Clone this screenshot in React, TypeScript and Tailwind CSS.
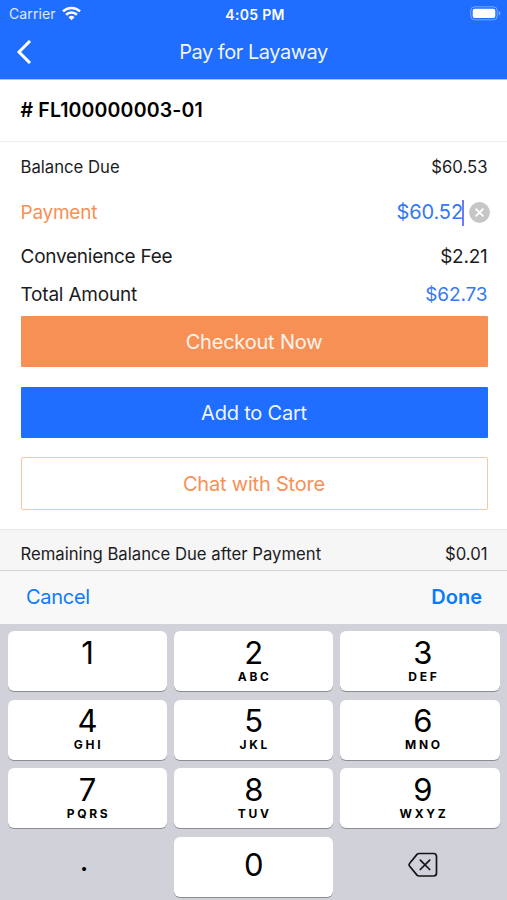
import { clsx } from "clsx";

type Key = { digit: string; letters?: string };

const keys: Key[] = [
  { digit: "1", letters: "" },
  { digit: "2", letters: "ABC" },
  { digit: "3", letters: "DEF" },
  { digit: "4", letters: "GHI" },
  { digit: "5", letters: "JKL" },
  { digit: "6", letters: "MNO" },
  { digit: "7", letters: "PQRS" },
  { digit: "8", letters: "TUV" },
  { digit: "9", letters: "WXYZ" },
];

const WifiIcon = () => (
  <svg width="19" height="15" viewBox="0 0 19 15" fill="none" stroke="white" strokeWidth="2.6">
    <path d="M1 5.4a12.2 12.2 0 0 1 17 0" />
    <path d="M4.1 8.7a7.7 7.7 0 0 1 10.8 0" />
    <path d="M9.5 14.3 6.5 11.3a4.3 4.3 0 0 1 6 0z" fill="white" stroke="none" />
  </svg>
);

const BatteryIcon = () => (
  <svg width="31" height="15" viewBox="0 0 31 15" fill="none">
    <rect x="0.8" y="0.8" width="26.4" height="13" rx="3.8" stroke="white" strokeOpacity="0.4" />
    <rect x="2.7" y="2.7" width="22.6" height="9.3" rx="2" fill="white" />
    <path d="M28.7 5v4.6c1-.4 1.6-1.3 1.6-2.3s-.6-1.9-1.6-2.3z" fill="white" fillOpacity="0.45" />
  </svg>
);

const DeleteIcon = () => (
  <svg width="30" height="26" viewBox="0 0 30 26" fill="none" stroke="#141416" strokeWidth="1.7" strokeLinejoin="round" strokeLinecap="round">
    <path d="M11.200 1.500H25.500a3 3 0 0 1 3 3V21a3 3 0 0 1-3 3H11.200a3 3 0 0 1-2.200-.9L1.900 14.500a2.600 2.600 0 0 1 0-3.500L9 2.400a3 3 0 0 1 2.200-.9z" />
    <path d="M12.300 8.100l9.400 9.400M21.700 8.100l-9.400 9.400" />
  </svg>
);

const Header = () => (
  <header className="h-[79px] bg-[#1f6eff] text-white">
    <div className="grid h-[27px] grid-cols-3 items-center pl-[9px] pr-[6px]">
      <div className="flex items-center gap-[6px] text-[14px] leading-[27px] tracking-[0.1px] text-white/85">
        <span>Carrier</span>
        <WifiIcon />
      </div>
      <span className="pt-px text-center text-[14px] font-semibold tracking-[0.3px] whitespace-nowrap">4:05 PM</span>
      <div className="flex justify-end">
        <BatteryIcon />
      </div>
    </div>
    <div className="grid h-[50px] grid-cols-[60px_1fr_60px] items-center">
      <button aria-label="Back" className="pl-[16px]">
        <svg width="16" height="24" viewBox="0 0 16 24" fill="none" stroke="white" strokeWidth="3">
          <path d="M14 1 3 12 14 23" />
        </svg>
      </button>
      <h1 className="text-center text-[20px] tracking-[-0.47px] text-white/95">Pay for Layaway</h1>
    </div>
  </header>
);

const Row = ({ label, value, className }: { label: string; value: string; className?: string }) => (
  <div className={clsx("flex items-center justify-between", className)}>
    <span>{label}</span>
    <span>{value}</span>
  </div>
);

const NumberPad = () => (
  <div className="grid h-[276px] grid-cols-3 content-start gap-x-[7px] gap-y-[8.500px] bg-[#d1d2d9] pt-[7px] pr-[7.500px] pl-[8px] text-black">
    {keys.map((key, i) => (
      <button
        key={key.digit}
        className={clsx(
          "flex h-[60px] flex-col items-center rounded-[6px] bg-white pt-[3.500px] shadow-[0_1px_0_#8b8c91]",
          i % 3 === 2 && "pl-[6px]"
        )}
      >
        <span className="text-[31px] leading-[35px]">{key.digit}</span>
        <span className="pl-[2px] text-[12px] leading-[14px] font-bold tracking-[2.700px]">{key.letters}</span>
      </button>
    ))}
    <button className="h-[60px] pr-[7px] text-[30px] leading-[38px] pb-[14px]">.</button>
    <button className="h-[60px] rounded-[6px] bg-white text-[31px] leading-[56px] pb-[3px] shadow-[0_1px_0_#8b8c91]">0</button>
    <button aria-label="Delete" className="flex h-[60px] items-center justify-center pb-[3px] pl-[7px]">
      <DeleteIcon />
    </button>
  </div>
);

const App = () => {
  return (
    <div className="h-[900px] w-[507px] overflow-hidden bg-white font-[Inter,'Liberation_Sans',sans-serif] text-[#1c1c1e]">
      <Header />
      <div className="h-px bg-[#a5c5ff]" />
      <div className="flex h-[62px] items-center border-b border-[#efefef] pl-[20.500px] text-[19.500px] font-semibold tracking-[0.15px] text-black">
        # FL100000003-01
      </div>

      {/* Payment details */}
      <section className="flex h-[174px] flex-col pr-[19.500px] pl-[20.500px]">
        <Row label="Balance Due" value="$60.53" className="h-[52px] text-[16.700px]" />
        <div className="flex h-[37px] items-center justify-between text-[19px]">
          <span className="pt-px tracking-[-0.25px] text-[#f79055]">Payment</span>
          <div className="flex items-center text-[#3478f6]">
            <span className="pb-px text-[20px] tracking-[-0.1px]">$60.52</span>
            <span className="-ml-px h-[26px] w-[2px] bg-[#6f7bf2]" />
            <svg className="-mr-[2px] ml-[4.500px]" width="21" height="21" viewBox="0 0 21 21">
              <circle cx="10.5" cy="10.5" r="10.4" fill="#c6c6c6" />
              <path d="M6.6 6.6l7.8 7.8M14.4 6.6l-7.8 7.8" stroke="white" strokeWidth="1.9" />
            </svg>
          </div>
        </div>
        <Row label="Convenience Fee" value="$2.21" className="h-[51px] pt-[2px] text-[19px] tracking-[-0.25px]" />
        <div className="flex h-[26px] items-center justify-between text-[19px]">
          <span className="tracking-[-0.2px]">Total Amount</span>
          <span className="tracking-[-0.1px] text-[#3478f6]">$62.73</span>
        </div>
      </section>

      {/* Actions */}
      <section className="flex h-[213px] flex-col pr-[19.500px] pl-[20.500px] text-[20px] tracking-[-0.2px]">
        <button className="h-[51px] rounded-[1px] bg-[#f79055] text-white/90">Checkout Now</button>
        <button className="mt-[20px] h-[51px] rounded-[1px] bg-[#1f6eff] text-white/95">Add to Cart</button>
        <button className="mt-[19px] h-[53px] rounded-[2px] border border-[#f9c6a8] text-[#f79055]">Chat with Store</button>
      </section>

      <Row
        label="Remaining Balance Due after Payment"
        value="$0.01"
        className="h-[41px] border-t border-[#e8e8e8] bg-[#f6f6f6] pt-[10px] pr-[19.500px] pl-[20.500px] text-[16.700px]"
      />

      {/* Keyboard toolbar */}
      <div className="flex h-[54px] items-center justify-between border-t border-[#d6d6d8] bg-[#f8f8f8] pr-[25px] pb-px pl-[26px] text-[20px] tracking-[-0.3px] text-[#0a7aff]">
        <button>Cancel</button>
        <button className="font-semibold tracking-normal">Done</button>
      </div>
      <NumberPad />
    </div>
  );
};

export default App;
